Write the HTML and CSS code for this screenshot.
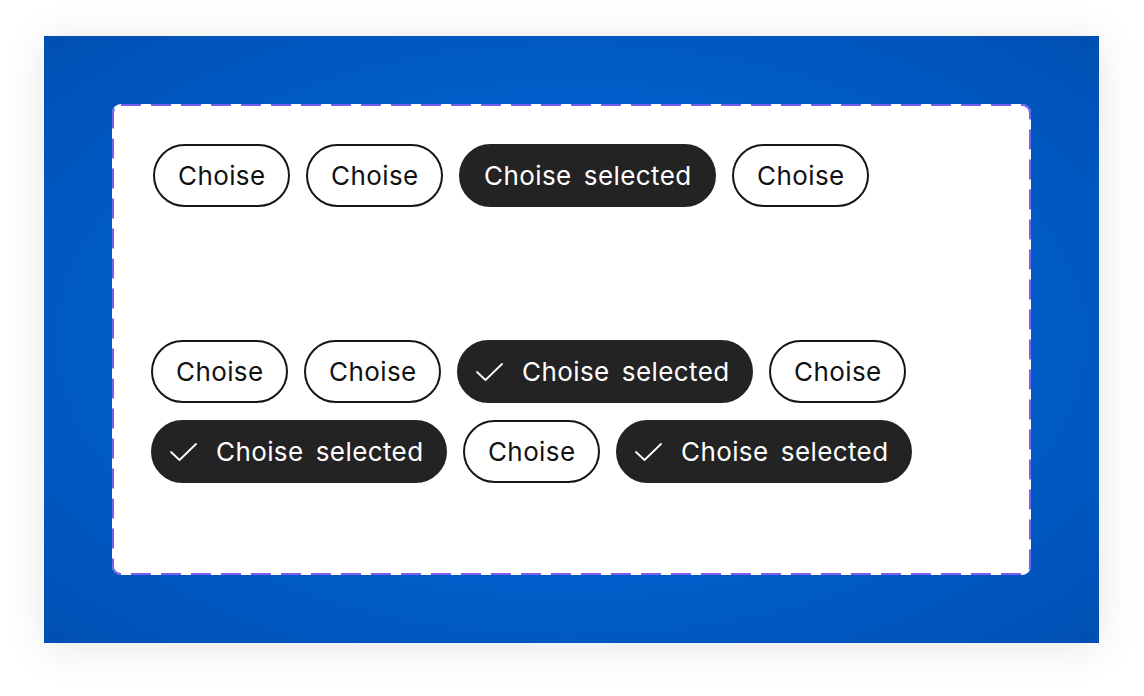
FILE: index.html
```html
<!DOCTYPE html>
<html>
<head>
<meta charset="utf-8">
<link rel="stylesheet" href="styles.css">
</head>
<body>
<div class="stage">
  <div class="panel">
    <div class="frame">
      <div class="group group-one">
        <span class="chip">Choise</span>
        <span class="chip">Choise</span>
        <span class="chip selected">Choise selected</span>
        <span class="chip">Choise</span>
      </div>
      <div class="group group-two">
        <span class="chip">Choise</span>
        <span class="chip">Choise</span>
        <span class="chip selected checked"><svg class="check" viewBox="0 0 28 20" width="28" height="20"><path d="M1 10 L9.5 18 L26 2" fill="none" stroke="#fff" stroke-width="1.8" stroke-linecap="round" stroke-linejoin="round"/></svg>Choise selected</span>
        <span class="chip">Choise</span>
        <span class="chip selected checked"><svg class="check" viewBox="0 0 28 20" width="28" height="20"><path d="M1 10 L9.5 18 L26 2" fill="none" stroke="#fff" stroke-width="1.8" stroke-linecap="round" stroke-linejoin="round"/></svg>Choise selected</span>
        <span class="chip">Choise</span>
        <span class="chip selected checked"><svg class="check" viewBox="0 0 28 20" width="28" height="20"><path d="M1 10 L9.5 18 L26 2" fill="none" stroke="#fff" stroke-width="1.8" stroke-linecap="round" stroke-linejoin="round"/></svg>Choise selected</span>
      </div>
    </div>
  </div>
</div>
</body>
</html>
```

FILE: styles.css
```css
html, body {
  margin: 0;
  padding: 0;
  background: #ffffff;
}

.stage {
  width: 1144px;
  height: 696px;
  padding: 36px 0 0 44px;
  box-sizing: border-box;
}

.panel {
  width: 1055px;
  height: 607px;
  box-sizing: border-box;
  padding: 68px;
  background: radial-gradient(ellipse at 50% 50%, #006bdc 0%, #0062d0 45%, #004fb3 100%);
  box-shadow: 0 4px 40px rgba(0, 0, 0, 0.10);
}

.frame {
  width: 919px;
  height: 471px;
  box-sizing: border-box;
  background-color: #ffffff;
  background-image: url("data:image/svg+xml,%3Csvg xmlns='http://www.w3.org/2000/svg' width='919' height='471'%3E%3Crect x='1' y='1' width='917' height='469' rx='8' ry='8' fill='none' stroke='%237c5cf5' stroke-width='2' stroke-dasharray='20 10'/%3E%3C/svg%3E");
  border-radius: 9px;
  padding: 40px 39px;
  font-family: "Inter", "Liberation Sans", sans-serif;
}

.group {
  display: flex;
  flex-wrap: wrap;
  gap: 17px 16px;
}

.group-one {
  padding-left: 2px;
  width: 760px;
}

.group-two {
  margin-top: 133px;
  width: 800px;
}

.chip {
  display: inline-flex;
  align-items: center;
  height: 63px;
  box-sizing: border-box;
  padding: 0 22.5px 0 23px;
  border: 2px solid #161616;
  border-radius: 32px;
  font-size: 26px;
  color: #111111;
  letter-spacing: 0.4px;
  word-spacing: 4.5px;
  white-space: nowrap;
}

.chip.selected {
  background: #232323;
  border-color: #232323;
  color: #ffffff;
}

.chip.checked {
  padding-left: 17px;
  padding-right: 21.5px;
}

.check {
  margin-right: 18px;
  margin-top: 1px;
}
```
